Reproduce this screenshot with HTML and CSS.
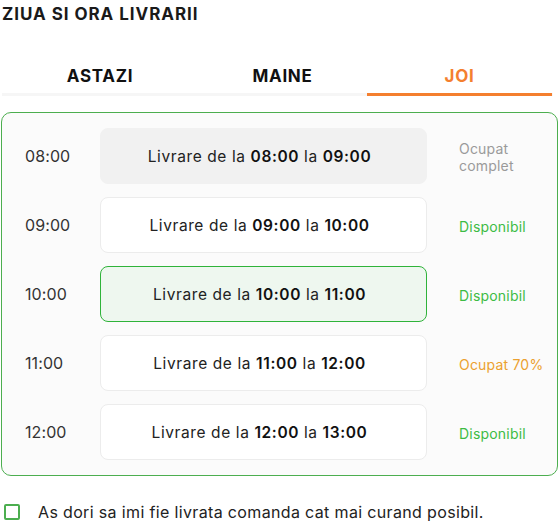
FILE: index.html
```html
<!DOCTYPE html>
<html lang="ro">
<head>
<meta charset="utf-8">
<title>Ziua si ora livrarii</title>
<link rel="stylesheet" href="styles.css">
</head>
<body>
<div class="page">
  <h2 class="title">ZIUA SI ORA LIVRARII</h2>
  <div class="tabs">
    <div class="tab">ASTAZI</div>
    <div class="tab">MAINE</div>
    <div class="tab active">JOI</div>
  </div>
  <div class="panel">
    <div class="row">
      <div class="time">08:00</div>
      <div class="slot full"><span>Livrare de la <b>08:00</b> la <b>09:00</b></span></div>
      <div class="status busy">Ocupat<br>complet</div>
    </div>
    <div class="row">
      <div class="time">09:00</div>
      <div class="slot"><span>Livrare de la <b>09:00</b> la <b>10:00</b></span></div>
      <div class="status ok">Disponibil</div>
    </div>
    <div class="row">
      <div class="time">10:00</div>
      <div class="slot selected"><span>Livrare de la <b>10:00</b> la <b>11:00</b></span></div>
      <div class="status ok">Disponibil</div>
    </div>
    <div class="row">
      <div class="time">11:00</div>
      <div class="slot"><span>Livrare de la <b>11:00</b> la <b>12:00</b></span></div>
      <div class="status partial">Ocupat 70%</div>
    </div>
    <div class="row">
      <div class="time">12:00</div>
      <div class="slot"><span>Livrare de la <b>12:00</b> la <b>13:00</b></span></div>
      <div class="status ok">Disponibil</div>
    </div>
  </div>
  <label class="check">
    <span class="box"></span>
    <span class="check-text">As dori sa imi fie livrata comanda cat mai curand posibil.</span>
  </label>
</div>
</body>
</html>
```
FILE: styles.css
```css
* { box-sizing: border-box; }
html, body { margin: 0; padding: 0; background: #fff; }
body {
  font-family: Inter, "Noto Sans", "Liberation Sans", sans-serif;
  color: #222;
}
.page {
  width: 559px;
  padding: 0 1px;
}
.title {
  margin: 0;
  padding: 4px 0 0 1px;
  font-size: 17px;
  font-weight: 700;
  line-height: 20px;
  letter-spacing: 0.95px;
  color: #1a1a1a;
}
.tabs {
  display: grid;
  grid-template-columns: 196px 169px 185px;
  margin-top: 36px;
  margin-left: 1px;
  border-bottom: 3px solid #f6f6f6;
  width: 551px;
}
.tab {
  text-align: center;
  font-size: 17px;
  font-weight: 700;
  line-height: 20px;
  letter-spacing: 0.7px;
  padding: 6px 0 7px;
  color: #111;
  margin-bottom: -3px;
  border-bottom: 3px solid transparent;
}
.tab.active {
  color: #f47f2f;
  border-bottom-color: #f47f2f;
}
.panel {
  margin-top: 16px;
  border: 1px solid #4cae4f;
  border-radius: 10px;
  background: #fbfbfb;
  padding: 15px 0 15px 0;
  display: flex;
  flex-direction: column;
  gap: 13px;
  width: 557px;
}
.row {
  display: grid;
  grid-template-columns: 98px 327px 1fr;
  align-items: center;
}
.time {
  padding-left: 23px;
  font-size: 16px;
  color: #333;
  letter-spacing: 0.1px;
}
.slot {
  height: 56px;
  border: 1px solid #ececec;
  border-radius: 8px;
  background: #fff;
  display: flex;
  align-items: center;
  justify-content: center;
  padding-right: 8px;
  font-size: 15.5px;
  color: #222;
  letter-spacing: 0.6px;
}
.slot b { font-weight: 600; color: #111; }
.slot.full { background: #f1f1f1; border-color: #f1f1f1; }
.slot.selected { background: #eef7ef; border-color: #2fb33a; }
.status {
  padding-left: 32px;
  padding-top: 2px;
  font-size: 14px;
  line-height: 17px;
  letter-spacing: 0.2px;
}
.status.busy { color: #9a9a9a; }
.status.ok { color: #3dbb45; }
.status.partial { color: #eba12f; }
.check {
  display: flex;
  align-items: center;
  gap: 18px;
  margin-top: 26px;
  padding-left: 3px;
}
.box {
  width: 16px;
  height: 16px;
  border: 2px solid #4cae4f;
  border-radius: 2px;
  flex: none;
}
.check-text {
  font-size: 16px;
  color: #222;
  letter-spacing: 0.35px;
}
```
